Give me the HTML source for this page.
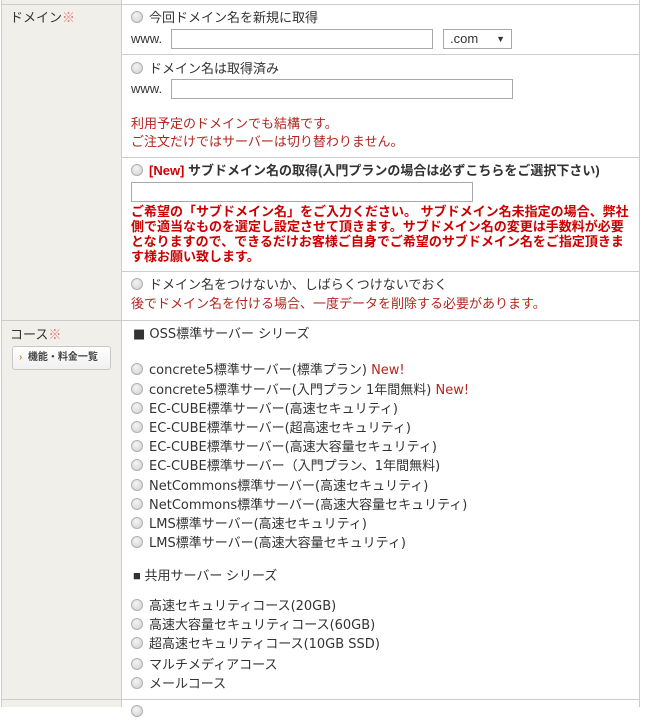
<!DOCTYPE html>
<html><head><meta charset="utf-8"><style>
body{margin:0;width:646px;height:707px;background:#fff;position:relative;overflow:hidden;font-family:"Liberation Sans","Noto Sans CJK JP",sans-serif;font-size:13px;color:#333}
.a{position:absolute;white-space:nowrap;line-height:18px}
.d{font-family:"DejaVu Sans","Noto Sans CJK JP",sans-serif;font-size:13px}
.hl{position:absolute;left:2px;width:638px;height:1px;background:#ccc}
.hr{position:absolute;left:122px;width:518px;height:1px;background:#ccc}
.r{display:inline-block;width:10px;height:10px;border-radius:50%;border:1px solid #b0b0b0;background:radial-gradient(circle at 40% 35%,#f4f4f4,#cfcfcf);vertical-align:-1px;margin-right:6px}
.red{color:#b3261e}
.bred{color:#c00;font-weight:bold}
.in{position:absolute;border:1px solid #a9a9a9;background:#fff;box-sizing:border-box}
</style></head><body>
<div style="position:absolute;left:2px;top:0;width:119px;height:707px;background:#f1efea"></div>
<div style="position:absolute;left:1px;top:0;width:1px;height:707px;background:#ccc"></div>
<div style="position:absolute;left:121px;top:0;width:1px;height:707px;background:#ccc"></div>
<div style="position:absolute;left:639px;top:0;width:1px;height:707px;background:#ccc"></div>
<div class="hl" style="top:4px"></div>
<div class="hr" style="top:54px"></div>
<div class="hr" style="top:157px"></div>
<div class="hr" style="top:271px"></div>
<div class="hl" style="top:320px"></div>
<div class="hl" style="top:699px"></div>

<div class="a" style="left:10px;top:9px">ドメイン<span style="color:#e07a7a">※</span></div>
<div class="a" style="left:131px;top:9px"><span class="r"></span>今回ドメイン名を新規に取得</div>
<div class="a" style="left:131px;top:30px">www.</div>
<div class="in" style="left:171px;top:29px;width:262px;height:20px"></div>
<div class="in" style="left:443px;top:29px;width:69px;height:20px;padding:1px 6px;line-height:16px">.com<span style="position:absolute;right:6px;font-size:9px">▼</span></div>

<div class="a" style="left:131px;top:60px"><span class="r"></span>ドメイン名は取得済み</div>
<div class="a" style="left:131px;top:80px">www.</div>
<div class="in" style="left:171px;top:79px;width:342px;height:20px"></div>
<div class="a red" style="left:131px;top:115px">利用予定のドメインでも結構です。</div>
<div class="a red" style="left:131px;top:133px">ご注文だけではサーバーは切り替わりません。</div>

<div class="a" style="left:131px;top:162px;font-weight:bold"><span class="r"></span><span style="color:#c00">[New]</span> サブドメイン名の取得(入門プランの場合は必ずこちらをご選択下さい)</div>
<div class="in" style="left:131px;top:182px;width:342px;height:20px"></div>
<div class="a bred" style="left:131px;top:204px;line-height:15px;white-space:normal;width:500px">ご希望の「サブドメイン名」をご入力ください。 サブドメイン名未指定の場合、弊社側で適当なものを選定し設定させて頂きます。サブドメイン名の変更は手数料が必要となりますので、できるだけお客様ご自身でご希望のサブドメイン名をご指定頂きます様お願い致します。</div>

<div class="a" style="left:131px;top:276px"><span class="r"></span>ドメイン名をつけないか、しばらくつけないでおく</div>
<div class="a red" style="left:131px;top:295px">後でドメイン名を付ける場合、一度データを削除する必要があります。</div>

<div class="a" style="left:10px;top:326px">コース<span style="color:#e07a7a">※</span></div>
<div style="position:absolute;left:12px;top:346px;width:99px;height:24px;box-sizing:border-box;border:1px solid #c8c8c8;border-radius:3px;background:linear-gradient(#fff,#f0f0f0);font-size:10px;line-height:22px;padding-left:6px;font-weight:bold;color:#444"><span style="color:#e08a3a">›</span>&nbsp;&nbsp;機能・料金一覧</div>

<div class="a d" style="left:133px;top:326px">■ OSS標準サーバー シリーズ</div>
<div class="a d" style="left:131px;top:362px"><span class="r"></span>concrete5標準サーバー(標準プラン) <span class="red">New!</span></div>
<div class="a d" style="left:131px;top:382px"><span class="r"></span>concrete5標準サーバー(入門プラン 1年間無料) <span class="red">New!</span></div>
<div class="a d" style="left:131px;top:401px"><span class="r"></span>EC-CUBE標準サーバー(高速セキュリティ)</div>
<div class="a d" style="left:131px;top:420px"><span class="r"></span>EC-CUBE標準サーバー(超高速セキュリティ)</div>
<div class="a d" style="left:131px;top:439px"><span class="r"></span>EC-CUBE標準サーバー(高速大容量セキュリティ)</div>
<div class="a d" style="left:131px;top:458px"><span class="r"></span>EC-CUBE標準サーバー（入門プラン、1年間無料)</div>
<div class="a d" style="left:131px;top:478px"><span class="r"></span>NetCommons標準サーバー(高速セキュリティ)</div>
<div class="a d" style="left:131px;top:497px"><span class="r"></span>NetCommons標準サーバー(高速大容量セキュリティ)</div>
<div class="a d" style="left:131px;top:516px"><span class="r"></span>LMS標準サーバー(高速セキュリティ)</div>
<div class="a d" style="left:131px;top:535px"><span class="r"></span>LMS標準サーバー(高速大容量セキュリティ)</div>
<div class="a" style="left:133px;top:567px">■ 共用サーバー シリーズ</div>
<div class="a d" style="left:131px;top:598px"><span class="r"></span>高速セキュリティコース(20GB)</div>
<div class="a d" style="left:131px;top:617px"><span class="r"></span>高速大容量セキュリティコース(60GB)</div>
<div class="a d" style="left:131px;top:636px"><span class="r"></span>超高速セキュリティコース(10GB SSD)</div>
<div class="a" style="left:131px;top:656px"><span class="r"></span>マルチメディアコース</div>
<div class="a" style="left:131px;top:675px"><span class="r"></span>メールコース</div>
<div class="a" style="left:131px;top:703px"><span class="r"></span></div>
</body></html>
